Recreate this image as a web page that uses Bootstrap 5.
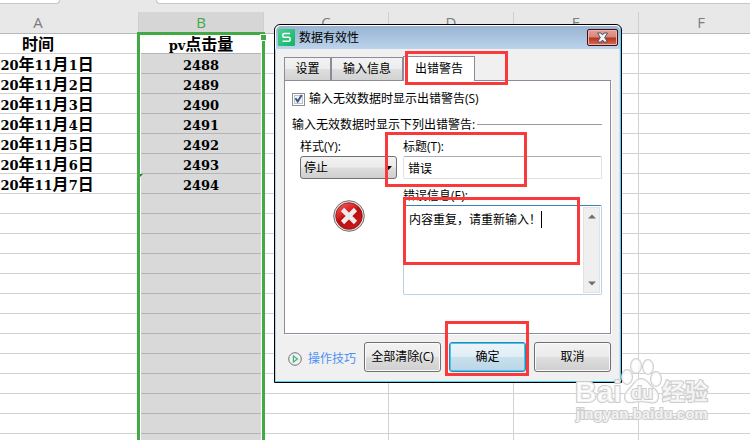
<!DOCTYPE html>
<html lang="zh-CN">
<head>
<meta charset="utf-8">
<meta name="viewport" content="width=device-width, initial-scale=1">
<title>数据有效性</title>
<link href="https://cdn.jsdelivr.net/npm/bootstrap@5.3.0/dist/css/bootstrap.min.css" rel="stylesheet">
<style>
body{font:12px/18px "Open Sans","Noto Sans CJK SC",sans-serif;color:#000;background:#fff}
.workspace{background:#fff}
.topstrip{height:12px;background:#e8e8e8}
.doc-tab{height:4px;background:#fff;border:1px solid #c6c6c6;border-top:0}
.doc-tab.first-tab{width:60px;border-left:0;border-radius:0 0 4px 0}
.doc-tab.rest-tab{border-right:0;border-radius:0 0 0 4px}
/* sheet scrolled 62px to the right */
.sheet{margin-left:-62px;width:826px}
.grid{table-layout:fixed;width:826px;border-collapse:separate;border-spacing:0}
.grid th,.grid td{padding:0;height:20px;text-align:center;white-space:nowrap;border-right:1px solid #d2d2d2;border-bottom:1px solid #d2d2d2;font:bold 16px/19px "Noto Sans CJK SC",sans-serif}
.grid thead th{height:22px;background:#e8e8e8;border-right-color:#cfcfcf;border-bottom-color:#b8b8b8;font:15px/21px "Open Sans",sans-serif;color:#7c7c7c}
.grid thead th:nth-child(2){background:#d6d6d6;color:#43a846}
.grid tbody tr+tr td:nth-child(2){background:#d9d9d9;border-bottom-color:#b4b4b4}
.grid tbody tr:first-child td:nth-child(2){border-bottom-color:#b4b4b4}
.dg{font:bold 13px/1px "DejaVu Serif",serif}
.selection{left:199px;top:20px;bottom:0;width:128px;border:3px solid #43a846;border-bottom:0;box-shadow:inset 1px 0 #fff,inset -1px 0 #fff}
.handle{right:-5px;top:-1px;width:7px;height:7px;background:#43a846;border:1px solid #fff}
.note-corner{left:0;top:139px;border:solid transparent;border-width:0 3px 3px 0;border-top:3px solid #128a1c;border-bottom:0}
.dlg{left:274px;top:24px;width:348px;border:1px solid #000;border-radius:6px 6px 0 0;background:#f0f0f0;box-shadow:inset -1px -1px #4fd0f5,inset 1px 1px #fff;padding:1px}
.dlg-title{height:23px;background:linear-gradient(#98b4d1,#bcd3ec);border-radius:5px 5px 0 0;padding:0 2px}
.close-btn{width:31px;height:17px;border:1px solid #43101a;border-radius:2px;background:linear-gradient(#e3a196 0,#d98578 48%,#b8321c 52%,#d0705a);box-shadow:inset 0 0 0 1px #eab5ab;padding:0;line-height:0}
.dlg-body{padding:7px 8px 9px 8px;border-left:1px solid #b9cfe8;margin-left:-1px;border-right:1px solid #d3e2f1}
.tab-btn{height:23px;border:1px solid #8b8b99;border-bottom:0;background:linear-gradient(#f3f3f3,#ececec 48%,#dedede 52%,#d2d2d2);padding:0;line-height:20px;color:#000}
.tab-btn.w-sm{width:47px}.tab-btn.w-md{width:72px}
.tab-btn.current{height:25px;background:#fff;width:72px;margin-bottom:-1px;z-index:1}
.pane{border:1px solid #8b8b99;background:#fff;padding:9px 8px 38px 7px;box-shadow:1px 1px #fff}
.tick{appearance:none;width:13px;height:13px;margin:0;border:1px solid #8e8f8f;background:#f4f4f4;box-shadow:inset 0 0 0 1px #fff,inset 0 0 0 2px #bcc3ce}
.tickmark{left:0;top:2px;pointer-events:none}
.rule-line{height:1px;background:#9a9aa4;margin:0 0 2px 2px}
.kind{width:97px}
.fields{margin-left:6px}
.sel{width:97px;height:23px;border:1px solid #707070;border-radius:3px;background:linear-gradient(#f2f2f2,#ebebeb 48%,#dddddd 52%,#cfcfcf);appearance:none;padding:0 3px;line-height:20px;color:#000}
.sel-arrow{right:4px;top:10px;pointer-events:none}
.stop-icon{margin-top:21px}
.txt{height:23px;border:1px solid #dfe2ea;border-top-color:#abadb8;border-radius:2px;padding:0 4px;outline:0;color:#000}
.memo{height:90px;border:1px solid #b5d3ec;border-top-color:#3c7fb1;border-radius:2px;padding:1px}
.memo textarea{border:0;outline:0;resize:none;padding:4px;overflow:hidden;background:transparent;color:#000}
.sbar{width:17px;background:#efefef;border:1px solid #e2e2e2;padding:6px 0}
.caret{left:137px;top:5px;width:1px;height:17px;background:#000}
.foot{margin-top:8px;gap:8px}
.wbtn{width:77px;height:30px;border:1px solid #707070;border-radius:3px;background:linear-gradient(#f2f2f2,#ebebeb 48%,#dddddd 52%,#cfcfcf);box-shadow:inset 0 0 0 1px #fafafa;padding:0;color:#000}
.wbtn.main-btn{border-color:#2f86b0;background:linear-gradient(#ecf4f9,#e0eef6 48%,#c9e0ec 52%,#b9d6e6);box-shadow:inset 0 0 0 1px #3fc8f3}
.tips{color:#4d90f5;text-decoration:none;gap:6px;margin-top:4px}
.frame{border:3px solid #fa3a3a;pointer-events:none;z-index:5}
.f1{left:405px;top:51px;width:103px;height:34px}
.f2{left:385px;top:132px;width:142px;height:55px}
.f3{left:403px;top:197px;width:177px;height:68px}
.f4{left:445px;top:321px;width:84px;height:55px}
.logo-mark{left:570px;top:355px;z-index:6;pointer-events:none}
.logo-mark text{font-family:"Liberation Sans",sans-serif;font-weight:bold}
.logo-mark .cn{font-family:"Noto Sans CJK SC",sans-serif}
</style>
<script src="https://cdn.jsdelivr.net/npm/bootstrap@5.3.0/dist/js/bootstrap.bundle.min.js" defer></script>
</head>
<body>
<main class="workspace position-relative overflow-hidden vh-100">
  <div class="topstrip d-flex justify-content-between">
    <div class="doc-tab first-tab me-5"></div><div class="me-5"></div><div class="doc-tab rest-tab flex-fill"></div>
  </div>
  <div class="sheet position-relative">
    <table class="grid">
      <colgroup><col style="width:201px"><col style="width:125px"><col style="width:125px"><col style="width:125px"><col style="width:125px"><col style="width:125px"></colgroup>
      <thead><tr><th>A</th><th>B</th><th>C</th><th>D</th><th>E</th><th>F</th></tr></thead>
      <tbody>
        <tr><td>时间</td><td><span class="dg">pv</span>点击量</td><td></td><td></td><td></td><td></td></tr>
        <tr><td><span class="dg">2020</span>年<span class="dg">11</span>月<span class="dg">1</span>日</td><td><span class="dg">2488</span></td><td></td><td></td><td></td><td></td></tr>
        <tr><td><span class="dg">2020</span>年<span class="dg">11</span>月<span class="dg">2</span>日</td><td><span class="dg">2489</span></td><td></td><td></td><td></td><td></td></tr>
        <tr><td><span class="dg">2020</span>年<span class="dg">11</span>月<span class="dg">3</span>日</td><td><span class="dg">2490</span></td><td></td><td></td><td></td><td></td></tr>
        <tr><td><span class="dg">2020</span>年<span class="dg">11</span>月<span class="dg">4</span>日</td><td><span class="dg">2491</span></td><td></td><td></td><td></td><td></td></tr>
        <tr><td><span class="dg">2020</span>年<span class="dg">11</span>月<span class="dg">5</span>日</td><td><span class="dg">2492</span></td><td></td><td></td><td></td><td></td></tr>
        <tr><td><span class="dg">2020</span>年<span class="dg">11</span>月<span class="dg">6</span>日</td><td><span class="dg">2493</span></td><td></td><td></td><td></td><td></td></tr>
        <tr><td><span class="dg">2020</span>年<span class="dg">11</span>月<span class="dg">7</span>日</td><td><span class="dg">2494</span></td><td></td><td></td><td></td><td></td></tr>
        <tr><td></td><td></td><td></td><td></td><td></td><td></td></tr>
        <tr><td></td><td></td><td></td><td></td><td></td><td></td></tr>
        <tr><td></td><td></td><td></td><td></td><td></td><td></td></tr>
        <tr><td></td><td></td><td></td><td></td><td></td><td></td></tr>
        <tr><td></td><td></td><td></td><td></td><td></td><td></td></tr>
        <tr><td></td><td></td><td></td><td></td><td></td><td></td></tr>
        <tr><td></td><td></td><td></td><td></td><td></td><td></td></tr>
        <tr><td></td><td></td><td></td><td></td><td></td><td></td></tr>
        <tr><td></td><td></td><td></td><td></td><td></td><td></td></tr>
        <tr><td></td><td></td><td></td><td></td><td></td><td></td></tr>
        <tr><td></td><td></td><td></td><td></td><td></td><td></td></tr>
        <tr><td></td><td></td><td></td><td></td><td></td><td></td></tr>
        <tr><td></td><td></td><td></td><td></td><td></td><td></td></tr>
      </tbody>
    </table>
    <div class="selection position-absolute"><i class="handle position-absolute"></i><i class="note-corner position-absolute"></i></div>
  </div>

  <section class="dlg position-absolute" role="dialog" aria-labelledby="dlgTitle">
    <header class="dlg-title d-flex align-items-center">
      <svg width="17" height="17" viewBox="0 0 17 17" aria-hidden="true"><defs><linearGradient id="gs" x2="1" y2="1"><stop stop-color="#4bd093"/><stop offset="1" stop-color="#13b364"/></linearGradient></defs><rect width="17" height="17" rx="1" fill="url(#gs)"/><path d="M12 4.600H6.200q-1.400 0-1.400 1.400v.9q0 1.400 1.400 1.400h4.500q1.400 0 1.400 1.400v1.200q0 1.400-1.400 1.400H4.600" fill="none" stroke="#fff" stroke-width="1.500"/></svg>
      <span id="dlgTitle" class="ms-1">数据有效性</span>
      <button type="button" class="close-btn ms-auto" aria-label="关闭"><svg width="13" height="11" viewBox="0 0 13 11"><path d="M1.500 1h3.500l1.500 2 1.500-2h3.500L8.700 5.500 11.500 10H8L6.500 8 5 10H1.500l2.800-4.500z" fill="#f5f5f5" stroke="#4a5568"/></svg></button>
    </header>
    <div class="dlg-body">
      <div class="d-flex align-items-end position-relative" role="tablist">
        <button type="button" role="tab" class="tab-btn w-sm">设置</button>
        <button type="button" role="tab" class="tab-btn w-md">输入信息</button>
        <button type="button" role="tab" class="tab-btn current position-relative" aria-selected="true">出错警告</button>
      </div>
      <div class="pane">
        <div class="d-flex align-items-center position-relative">
          <input class="tick" type="checkbox" id="showErr" checked>
          <svg class="tickmark position-absolute" width="13" height="13" viewBox="0 0 13 13" aria-hidden="true"><path d="M3.500 6.200l2.200 3.300L9.700 3" fill="none" stroke="#3c4f8f" stroke-width="1.900"/></svg>
          <label for="showErr" class="ms-1">输入无效数据时显示出错警告(S)</label>
        </div>
        <div class="d-flex align-items-center mt-2"><span>输入无效数据时显示下列出错警告:</span><span class="rule-line flex-fill"></span></div>
        <div class="d-flex ps-2 pt-1">
          <div class="kind flex-shrink-0">
            <label for="style" class="d-block">样式(Y):</label>
            <div class="position-relative">
              <select id="style" class="sel d-block"><option>停止</option></select>
              <svg class="sel-arrow position-absolute" width="8" height="4" aria-hidden="true"><path d="M0 0h7L3.500 4z"/></svg>
            </div>
            <svg class="stop-icon d-block mx-auto" width="32" height="32" viewBox="0 0 32 32" aria-hidden="true"><defs><linearGradient id="gr" x2=".6" y2="1"><stop stop-color="#f0686a"/><stop offset=".45" stop-color="#d81f20"/><stop offset=".55" stop-color="#b80d0e"/><stop offset="1" stop-color="#c91a1a"/></linearGradient></defs><circle cx="16" cy="16" r="15.300" fill="#e4e4e4" stroke="#6d6d6d"/><circle cx="16" cy="16" r="13.300" fill="url(#gr)" stroke="#8f1416" stroke-width=".8"/><path d="M9.500 9.500l13 13m0-13l-13 13" stroke="#ececec" stroke-width="4.600"/></svg>
          </div>
          <div class="fields flex-fill">
            <label for="ttl" class="d-block">标题(T):</label>
            <input id="ttl" class="txt d-block w-100" type="text" value="错误">
            <label for="msg" class="d-block mt-2">错误信息(E):</label>
            <div class="memo d-flex position-relative">
              <textarea id="msg" class="flex-fill">内容重复，请重新输入！</textarea>
              <span class="caret position-absolute"></span>
              <div class="sbar d-flex flex-column justify-content-between align-items-center" aria-hidden="true">
                <svg width="8" height="5"><path d="M0 4.500L4 .5l4 4z" fill="#6e6e6e"/></svg>
                <svg width="8" height="5"><path d="M0 .5l4 4 4-4z" fill="#6e6e6e"/></svg>
              </div>
            </div>
          </div>
        </div>
      </div>
      <div class="foot d-flex align-items-center">
        <a href="#" class="tips d-flex align-items-center ms-1 me-auto"><svg width="14" height="14" viewBox="0 0 14 14" aria-hidden="true"><circle cx="7" cy="7" r="6.300" fill="none" stroke="#6f7478"/><path d="M5.400 4v6l4-3z" fill="none" stroke="#3db87a" stroke-width="1.200"/></svg>操作技巧</a>
        <button type="button" class="wbtn">全部清除(C)</button>
        <button type="button" class="wbtn main-btn">确定</button>
        <button type="button" class="wbtn">取消</button>
      </div>
    </div>
  </section>

  <div class="frame f1 position-absolute"></div>
  <div class="frame f2 position-absolute"></div>
  <div class="frame f3 position-absolute"></div>
  <div class="frame f4 position-absolute"></div>

  <svg class="logo-mark position-absolute" width="150" height="72" viewBox="0 0 150 72" fill="#fff" fill-opacity=".75" stroke="#cdcdcd" stroke-width="2" paint-order="stroke">
    <text x="5" y="47" font-size="30">Bai</text>
    <path d="M71 24c5 0 7 4 10 7 4 4 8 6 7 12-1 5-5 5-9 4-5-1-11-1-16 0-4 1-8 0-8-5 0-5 4-7 7-11 3-3 4-7 9-7z"/>
    <ellipse cx="57" cy="22" rx="5" ry="7"/><ellipse cx="66" cy="11" rx="5" ry="7"/><ellipse cx="78" cy="12" rx="5" ry="7"/><ellipse cx="86" cy="24" rx="5" ry="7"/>
    <text x="61" y="44" font-size="18">du</text>
    <text class="cn" x="92" y="45" font-size="23">经验</text>
    <text x="6" y="64" font-size="15">jingyan.baidu.com</text>
  </svg>
</main>
</body>
</html>
